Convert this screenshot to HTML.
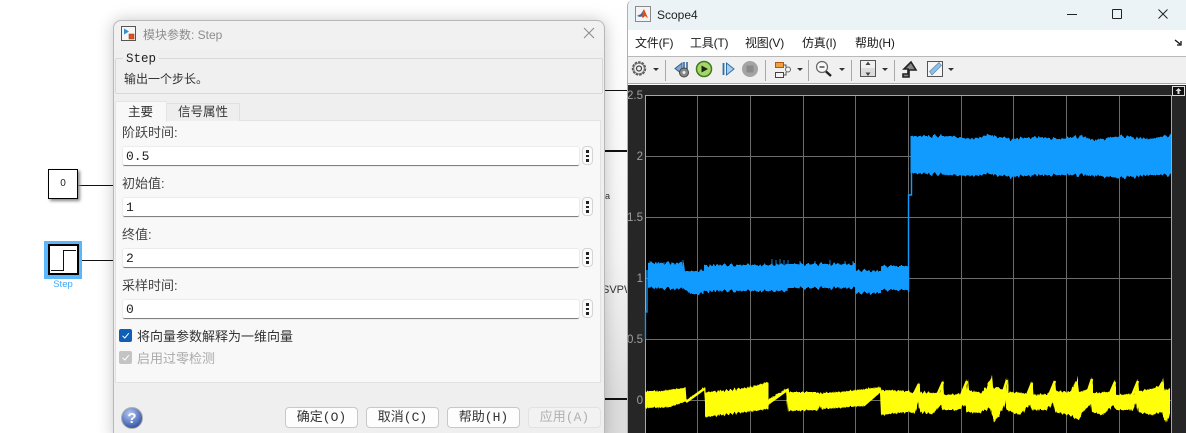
<!DOCTYPE html>
<html><head><meta charset="utf-8">
<style>
html,body{margin:0;padding:0;background:#fff;}
#r{position:relative;width:1186px;height:433px;overflow:hidden;background:#fff;font-family:"Liberation Sans","Noto Sans CJK SC",sans-serif;}
#r div,#r span,#r svg{position:absolute;}
.t{white-space:nowrap;line-height:16px;}
.lab{font-size:13px;color:#444;left:122px;}
.f{left:123px;width:456px;height:18px;background:#fff;border-bottom:1px solid #808080;border-radius:2px;box-shadow:0 0 0 1px #ececec;}
.v{left:126px;font-family:"Liberation Mono",monospace;font-size:13px;color:#222;}
.d{left:582px;width:9px;height:17px;border:1px solid #d4d4d4;border-radius:4px;background:#fafafa;}
.d i{position:absolute;left:3px;width:2.500px;height:2.500px;background:#222;}
.b{top:407px;width:71px;height:19px;border:1px solid #c8c8c8;border-radius:4px;background:#fdfdfd;text-align:center;font-size:13px;line-height:19px;color:#333;font-family:"Liberation Mono","Noto Sans CJK SC",sans-serif;}
.m{top:35px;font-size:12px;letter-spacing:-.2px;color:#1a1a1a;line-height:16px;white-space:nowrap;}
.s{top:60px;width:1px;height:21px;background:#a8a8a8;}
.dd{width:0;height:0;border-left:3px solid transparent;border-right:3px solid transparent;border-top:3px solid #333;top:68px;}
.yt{color:#a0a0a0;font-size:11.5px;width:18px;text-align:right;left:625px;line-height:12px;}
</style></head><body>
<div id="r">
<!-- background shadows -->
<div style="left:604px;top:0;width:24px;height:433px;background:linear-gradient(#fff 0,#f4f4f4 60%,#d8d8d8 100%);"></div>
<div style="left:604px;top:90px;width:24px;height:1px;background:#111;"></div>
<div style="left:604px;top:150px;width:24px;height:2px;background:#111;"></div>
<div style="left:604px;top:398px;width:24px;height:2px;background:#111;"></div>
<div style="left:604px;top:400px;width:24px;height:33px;background:#dcdcdc;"></div>
<span class="t" style="left:605px;top:188px;font-size:9px;color:#333;">a</span>
<span class="t" style="left:602px;top:282px;font-size:11px;color:#333;">SVPW</span>

<!-- blocks -->
<div style="left:78px;top:185px;width:36px;height:1px;background:#111;"></div>
<div style="left:48px;top:169px;width:28px;height:28px;border:1.5px solid #000;background:#fff;box-shadow:2px 2px 3px #888;"></div>
<span class="t" style="left:48px;top:176px;width:30px;text-align:center;font-size:10px;color:#222;font-family:'Liberation Sans',sans-serif;">0</span>
<div style="left:78px;top:260px;width:36px;height:1px;background:#111;"></div>
<div style="left:44px;top:241px;width:38px;height:38px;background:#5ab7fb;"></div>
<div style="left:48px;top:244px;width:27px;height:27px;border:2px solid #000;background:#fff;"></div>
<svg style="left:48px;top:244px;" width="31" height="31"><path d="M3 26.500H15.500V6.500H28" fill="none" stroke="#111" stroke-width="1"/></svg>
<span class="t" style="left:43px;top:277px;width:40px;text-align:center;font-size:9.500px;color:#3aa7fb;">Step</span>

<!-- dialog -->
<div style="left:113px;top:20px;width:490px;height:420px;background:#efefef;border:1px solid #b8b8b8;border-radius:8px;box-shadow:0 0 16px rgba(0,0,0,.22);"></div>
<div style="left:114px;top:21px;width:489px;height:29px;background:#f1f1f1;border-radius:8px 8px 0 0;"></div>
<svg style="left:121px;top:26px;" width="16" height="16"><rect x=".5" y=".5" width="14" height="14" fill="#f6f6f6" stroke="#555"/><path d="M3 2.500L8 5.500L3 8.500Z" fill="#2f8fd8"/><rect x="8" y="8" width="5" height="5" fill="#e0521c" stroke="#8a3010" stroke-width=".5"/></svg>
<span class="t" style="left:143px;top:27px;font-size:12px;color:#8c8c8c;">模块参数: Step</span>
<svg style="left:583px;top:27px;" width="12" height="12"><path d="M1 1L11 11M11 1L1 11" stroke="#8a8a8a" stroke-width="1" fill="none"/></svg>

<div style="left:115px;top:58px;width:486px;height:34px;border:1px solid #d8d8d8;background:#f0f0f0;border-radius:2px;"></div>
<span class="t" style="left:123px;top:51px;padding:0 3px;background:#f0f0f0;font-family:'Liberation Mono',monospace;font-size:12.5px;color:#222;">Step</span>
<span class="t" style="left:124px;top:71px;font-size:12px;color:#333;">输出一个步长。</span>

<div style="left:115px;top:120px;width:484px;height:261px;background:#f8f8f8;border:1px solid #e2e2e2;"></div>
<div style="left:166px;top:103px;width:72px;height:17px;background:#eeeeee;border:1px solid #e0e0e0;border-bottom:none;"></div>
<div style="left:115px;top:101px;width:50px;height:20px;background:#f8f8f8;border:1px solid #e4e4e4;border-bottom:none;border-radius:2px 2px 0 0;"></div>
<span class="t" style="left:128px;top:104px;font-size:12.5px;color:#333;">主要</span>
<span class="t" style="left:178px;top:104px;font-size:12.5px;color:#333;">信号属性</span>

<span class="t lab" style="top:125px;">阶跃时间:</span>
<div class="f" style="top:147px;"></div><span class="t v" style="top:149px;">0.5</span>
<div class="d" style="top:146px;"><i style="top:3px"></i><i style="top:7.500px"></i><i style="top:12px"></i></div>
<span class="t lab" style="top:176px;">初始值:</span>
<div class="f" style="top:198px;"></div><span class="t v" style="top:200px;">1</span>
<div class="d" style="top:197px;"><i style="top:3px"></i><i style="top:7.500px"></i><i style="top:12px"></i></div>
<span class="t lab" style="top:227px;">终值:</span>
<div class="f" style="top:249px;"></div><span class="t v" style="top:251px;">2</span>
<div class="d" style="top:248px;"><i style="top:3px"></i><i style="top:7.500px"></i><i style="top:12px"></i></div>
<span class="t lab" style="top:278px;">采样时间:</span>
<div class="f" style="top:300px;"></div><span class="t v" style="top:302px;">0</span>
<div class="d" style="top:299px;"><i style="top:3px"></i><i style="top:7.500px"></i><i style="top:12px"></i></div>

<svg style="left:119px;top:329px;" width="14" height="14"><rect width="13" height="13" rx="2" fill="#0f5fb8"/><path d="M3.500 6.800L5.800 9L9.800 4.200" stroke="#fff" stroke-width="1" fill="none"/></svg>
<span class="t" style="left:137px;top:329px;font-size:13px;color:#333;">将向量参数解释为一维向量</span>
<svg style="left:119px;top:351px;" width="14" height="14"><rect width="13" height="13" rx="2" fill="#c4c4c4"/><path d="M3.500 6.800L5.800 9L9.800 4.200" stroke="#fff" stroke-width="1" fill="none"/></svg>
<span class="t" style="left:137px;top:351px;font-size:13px;color:#aaa;">启用过零检测</span>

<svg style="left:121px;top:407px;" width="23" height="23"><defs><radialGradient id="q" cx=".4" cy=".3" r=".8"><stop offset="0" stop-color="#b8c8f0"/><stop offset=".6" stop-color="#5a78c0"/><stop offset="1" stop-color="#2a3f88"/></radialGradient></defs><circle cx="11" cy="11" r="10.500" fill="url(#q)" stroke="#b0b0b0"/><text x="11" y="16" text-anchor="middle" font-size="15" font-weight="bold" fill="#fff" font-family="Liberation Sans">?</text></svg>
<div class="b" style="left:285px;">确定(O)</div>
<div class="b" style="left:366px;">取消(C)</div>
<div class="b" style="left:447px;">帮助(H)</div>
<div class="b" style="left:528px;color:#b0b0b0;border-color:#e2e2e2;background:#f2f2f2;">应用(A)</div>

<!-- scope window -->
<div style="left:627px;top:0;width:559px;height:433px;background:#fff;border-left:1px solid #b0b0b0;border-radius:6px 0 0 0;box-sizing:border-box;"></div>
<div style="left:628px;top:0;width:558px;height:30px;background:#ecf3f7;border-radius:6px 0 0 0;"></div>
<svg style="left:635px;top:6px;" width="16" height="17"><rect x=".5" y=".5" width="15" height="15" fill="#f4f4f4" stroke="#8a8a8a"/><path d="M2 10L6 8L9 3L13 12L10 10L8 12L6 10Z" fill="#d8501c"/><path d="M2 10L6 8L8 5L7 10L5 11Z" fill="#2a6fb8"/></svg>
<span class="t" style="left:657px;top:7px;font-size:12px;color:#222;">Scope4</span>
<div style="left:1067px;top:14px;width:10px;height:1px;background:#222;"></div>
<div style="left:1112px;top:9px;width:8px;height:8px;border:1px solid #222;border-radius:1px;"></div>
<svg style="left:1157px;top:8px;" width="12" height="12"><path d="M1.500 1.500L10.500 10.500M10.500 1.500L1.500 10.500" stroke="#222" stroke-width="1" fill="none"/></svg>

<span class="m" style="left:635px;">文件(F)</span>
<span class="m" style="left:690px;">工具(T)</span>
<span class="m" style="left:745px;">视图(V)</span>
<span class="m" style="left:802px;">仿真(I)</span>
<span class="m" style="left:855px;">帮助(H)</span>
<svg style="left:1174px;top:39px;" width="9" height="8"><path d="M1 1L6 5M7 2V6H3" stroke="#111" stroke-width="1.300" fill="none"/></svg>

<div style="left:628px;top:56px;width:558px;height:28px;background:#f0f0f0;border-top:1px solid #b8b8b8;border-bottom:1px solid #a8a8a8;box-sizing:border-box;"></div>
<div style="left:628px;top:84px;width:558px;height:1px;background:#fff;"></div>

<svg style="left:628px;top:57px;" width="340" height="26" fill="none">
<circle cx="11" cy="11.500" r="6" stroke="#555" stroke-width="2.400" stroke-dasharray="2.400 1"/><circle cx="11" cy="11.500" r="5.500" stroke="#777" stroke-width="1"/><circle cx="11" cy="11.500" r="2.500" stroke="#444" stroke-width="1.200" fill="#eee"/>
<path d="M47 11.500L54 6V17Z" fill="#7fa8d0" stroke="#2f5f90"/><path d="M56 5V12M59 5V12" stroke="#2f5f90" stroke-width="1.500"/><circle cx="56" cy="15.500" r="4.500" fill="#888" stroke="#444"/><circle cx="56" cy="15.500" r="1.500" fill="#eee"/>
<circle cx="76" cy="12" r="7.500" fill="#a6d66a" stroke="#3e7a1e" stroke-width="1.500"/><path d="M73.500 8.500L80 12L73.500 15.500Z" fill="#1a2a12"/>
<path d="M95.500 6V18" stroke="#2f6fa8" stroke-width="1.800"/><path d="M98.500 6L106 12L98.500 18Z" fill="#a8cdec" stroke="#2f6fa8"/>
<circle cx="122" cy="12" r="8" fill="#a4a4a4"/><rect x="118.500" y="8.500" width="7" height="7" fill="#8a8a8a"/>
<rect x="147.500" y="5.500" width="8" height="5" fill="#f0a040" stroke="#b05a10"/><rect x="147.500" y="15.500" width="8" height="5" fill="#f4f4f4" stroke="#444"/><circle cx="160" cy="12.500" r="2.500" stroke="#666" fill="#f4f4f4"/><path d="M155.500 8H158V10.500M155.500 18H158V15" stroke="#555"/>
<circle cx="194" cy="10" r="5.500" fill="#f8f8f8" stroke="#666" stroke-width="1.200"/><path d="M191.500 10H196.500" stroke="#222" stroke-width="1.200"/><path d="M198 14.500L203 19" stroke="#222" stroke-width="2.400"/>
<rect x="232.500" y="3.500" width="15" height="16" fill="#f0f0f0" stroke="#555"/><rect x="233" y="11" width="14" height="8" fill="#dcdcdc"/><path d="M240 4.500L237.500 8H242.500ZM240 19L237.500 15.500H242.500Z" fill="#444"/>
<path d="M275 20H281V13H288L283 5L276 12H280V17H275Z" stroke="#222" stroke-width="1.600" fill="#888"/>
<rect x="299.500" y="4.500" width="15" height="15" fill="#f6f6f6" stroke="#555"/><path d="M301.500 14.500L311 5.500L313.500 8.500L304 18Z" fill="#8cc0e8" stroke="#5a80a0" stroke-width=".6"/>
</svg>
<div class="dd" style="left:653px;"></div>
<div class="s" style="left:665px;"></div>
<div class="s" style="left:765px;"></div>
<div class="dd" style="left:797px;"></div>
<div class="s" style="left:808px;"></div>
<div class="dd" style="left:839px;"></div>
<div class="s" style="left:851px;"></div>
<div class="dd" style="left:882px;"></div>
<div class="s" style="left:894px;"></div>
<div class="dd" style="left:948px;"></div>

<!-- plot -->
<div style="left:628px;top:85px;width:558px;height:348px;background:#262626;"></div>
<div style="left:645px;top:95px;width:527px;height:338px;background:#000;"></div>
<span class="t yt" style="top:90px;">2.5</span>
<span class="t yt" style="top:151px;">2</span>
<span class="t yt" style="top:212px;">1.5</span>
<span class="t yt" style="top:273px;">1</span>
<span class="t yt" style="top:334px;">0.5</span>
<span class="t yt" style="top:395px;">0</span>
<svg style="left:1172px;top:86px;" width="14" height="10"><rect x=".5" y=".5" width="12" height="9" fill="#111" stroke="#ddd"/><path d="M6.500 2L3.500 5H5.500V8H7.500V5H9.500Z" fill="#ddd"/></svg>

<svg style="left:0;top:0;" width="1186" height="433">
<defs>
<filter id="jb" x="-2%" y="-20%" width="104%" height="140%" color-interpolation-filters="sRGB"><feTurbulence type="fractalNoise" baseFrequency="0.3 0.0001" numOctaves="2" seed="4"/><feDisplacementMap in="SourceGraphic" scale="8" yChannelSelector="R" xChannelSelector="A"/></filter>
<filter id="jy" x="-2%" y="-20%" width="104%" height="140%" color-interpolation-filters="sRGB"><feTurbulence type="fractalNoise" baseFrequency="0.5 0.0001" numOctaves="2" seed="9"/><feDisplacementMap in="SourceGraphic" scale="5" yChannelSelector="R" xChannelSelector="A"/></filter>
</defs>
<g stroke="#6c6c6c" stroke-width="1" fill="none">
<path d="M697.500 95V433M750.500 95V433M803.500 95V433M855.500 95V433M908.500 95V433M961.500 95V433M1013.500 95V433M1066.500 95V433M1119.500 95V433"/>
<path d="M645 156.500H1171M645 217.500H1171M645 278.500H1171M645 339.500H1171M645 400.500H1171"/>
</g>
<path d="M645.500 95.500H1171.500V433M645.500 95V433" stroke="#a8a8a8" fill="none"/>
<!-- blue -->
<path d="M645.500 339V312H647V270" stroke="#129bff" stroke-width="1.300" fill="none"/>
<path d="M908.500 292V195H911.500V170" stroke="#129bff" stroke-width="1.400" fill="none"/>
<path d="M650 272V261M656 272V262M664 272V262M672 272V262M680 272V262M683 272V260M772 272V259M776 272V260M780 272V259M784 272V260M788 272V260M800 272V261M815 272V261M830 272V260M845 272V261M853 272V261" stroke="#0f7ccc" stroke-width="1" fill="none"/>
<g fill="#129bff">
<path filter="url(#jb)" d="M648 263L683 263L684 271L705 271L705 265L768 265L788 264L854 264L855 270L881 271L881 266L908 266L908 290L881 290L881 293L855 293L855 288L788 288L788 291L705 291L704 294L692 294L684 289L648 288Z"/>
<path filter="url(#jb)" d="M912 136L950 136L970 139L990 135L1010 139L1040 137L1060 139L1080 136L1095 140L1120 136L1150 139L1171 135L1171 175L1150 175L1120 178L1100 176L1080 175L1040 175L1010 177L990 174L970 176L950 175L912 173Z"/>
</g>
<!-- yellow -->
<g fill="#ffff0a" filter="url(#jy)">
<path d="M645 391L660 391L675 389L684 388L686 386L687 400L693 396L705 387L706 392L730 390L750 387L768 382L769 381L769 399L788 388L789 392L818 392L819 394L822 393L850 391L864 389L881 387L881 390L908 391L913 393L916 390L919 382L920 392L937 393L940 393L943 380L944 395L958 394L962 394L967 379L968 390L982 393L988 384L992 375L993 388L998 387L1003 390L1007 378L1008 392L1025 393L1028 395L1032 381L1033 395L1047 394L1050 394L1055 379L1056 391L1070 392L1074 385L1078 376L1079 392L1086 390L1089 388L1092 377L1093 393L1108 392L1112 392L1115 380L1116 395L1131 394L1134 395L1138 379L1139 391L1155 388L1160 385L1163 377L1165 391L1170 388L1171 388L1171 412L1166 423L1161 412L1153 415L1138 412L1136 403L1133 410L1116 410L1113 405L1103 415L1092 412L1091 404L1082 413L1079 420L1069 415L1055 412L1053 403L1046 410L1032 410L1030 405L1019 415L1007 410L1006 400L1000 415L994 422L990 408L979 413L967 412L965 405L958 410L943 410L941 405L932 414L920 412L918 402L915 413L908 412L881 415L880 392L864 406L822 409L820 406L818 410L788 411L786 391L770 402L768 409L730 414L705 417L704 389L687 401L670 407L645 408Z"/>
</g>
<path d="M686 402L704 389M769 403L787 390M864 405L880 391M912 398L919 384M936 398L943 382M960 398L967 381M1000 402L1007 380M1026 398L1032 383M1048 398L1055 381M1085 400L1092 379M1108 398L1115 382M1131 398L1138 381" stroke="#ffff0a" stroke-width="2.600" fill="none"/>
</svg>
</div>
</body></html>
